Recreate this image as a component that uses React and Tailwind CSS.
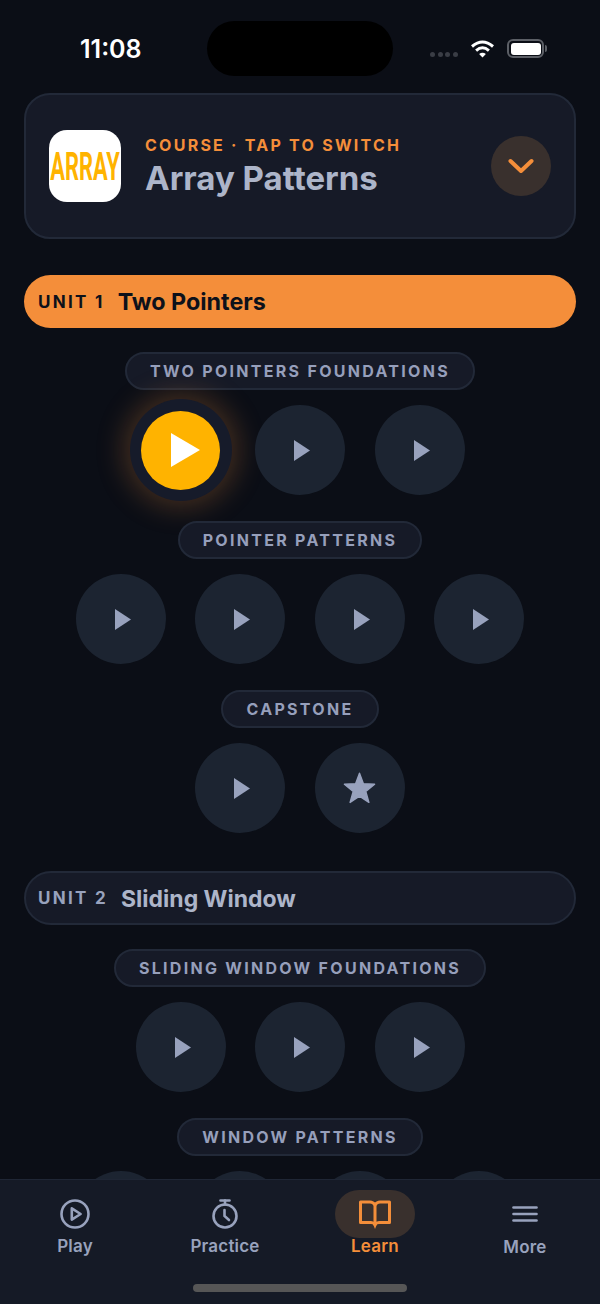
const units = [
  {
    id: 1,
    title: 'Two Pointers',
    active: true,
    groups: [
      { name: 'TWO POINTERS FOUNDATIONS', nodes: ['current', 'play', 'play'] },
      { name: 'POINTER PATTERNS', nodes: ['play', 'play', 'play', 'play'] },
      { name: 'CAPSTONE', nodes: ['play', 'star'] },
    ],
  },
  {
    id: 2,
    title: 'Sliding Window',
    active: false,
    groups: [
      { name: 'SLIDING WINDOW FOUNDATIONS', nodes: ['play', 'play', 'play'] },
      { name: 'WINDOW PATTERNS', nodes: ['play', 'play', 'play', 'play'] },
    ],
  },
];

function Triangle({ className }) {
  return (
    <svg viewBox="0 0 16 21" preserveAspectRatio="none" className={className} fill="currentColor">
      <path d="M0 0 L16 10.5 L0 21 Z" />
    </svg>
  );
}

function StarIcon() {
  return (
    <svg viewBox="0 0 33 32" className="h-[32px] w-[33px]" fill="currentColor" stroke="currentColor" strokeWidth="1.4" strokeLinejoin="round">
      <path d="M16.5 1.2 L20.4 11.8 L31.6 12.3 L22.8 19.4 L25.9 30.4 L16.5 24.2 L7.1 30.4 L10.2 19.4 L1.4 12.3 L12.6 11.8 Z" />
    </svg>
  );
}

function Node({ type }) {
  if (type === 'current') {
    return (
      <div className="flex h-[90px] w-[90px] items-center justify-center">
        <div className="flex h-[102px] w-[102px] shrink-0 items-center justify-center rounded-full bg-[#161b2a] shadow-[0_0_28px_6px_rgba(245,143,58,0.25)]">
          <div className="flex h-[79px] w-[79px] items-center justify-center rounded-full bg-[#ffb300] text-white">
            <Triangle className="ml-[9px] h-[34px] w-[29px]" />
          </div>
        </div>
      </div>
    );
  }
  return (
    <div className="flex h-[90px] w-[90px] items-center justify-center rounded-full bg-[#1c2431] text-[#98a2bd]">
      {type === 'star' ? <StarIcon /> : <Triangle className="ml-[4px] h-[21px] w-[16px]" />}
    </div>
  );
}

function Group({ group, first }) {
  return (
    <div className={first ? 'mt-[24px] flex flex-col items-center' : 'mt-[26px] flex flex-col items-center'}>
      <div className="flex h-[38px] items-center rounded-full border-2 border-[#222938] bg-[#161a27] px-[23px] text-[16px] font-bold tracking-[2.3px] text-[#969fbb]">
        {group.name}
      </div>
      <div className="mt-[15px] flex justify-center gap-[29.5px]">
        {group.nodes.map((type, i) => (
          <Node key={i} type={type} />
        ))}
      </div>
    </div>
  );
}

function StatusBar() {
  return (
    <div className="relative h-[93px] shrink-0">
      <div className="absolute left-[80px] top-[33px] text-[25px] font-semibold leading-[32px] text-white">11:08</div>
      <div className="absolute left-[207px] top-[21px] h-[55px] w-[186px] rounded-full bg-black" />
      <div className="absolute left-[430px] top-[52px] flex gap-[2.5px]">
        {[0, 1, 2, 3].map((i) => (
          <span key={i} className="h-[5px] w-[5px] rounded-full bg-[#3a3d45]" />
        ))}
      </div>
      <svg viewBox="0 0 24 18" className="absolute left-[470px] top-[40px] h-[18px] w-[25px]" fill="none" stroke="white" strokeWidth="3">
        <path d="M1.5 6.5 Q12 -2.5 22.5 6.5" />
        <path d="M5.6 10.6 Q12 5 18.4 10.6" />
        <path d="M12 17.5 L8.6 13.9 Q12 11.4 15.4 13.9 Z" fill="white" stroke="none" />
      </svg>
      <div className="absolute left-[507px] top-[39px] h-[19px] w-[37px] rounded-[6px] border-2 border-[#5c5f66] p-[1.5px]">
        <div className="h-full w-full rounded-[3px] bg-white" />
      </div>
      <div className="absolute left-[545px] top-[45px] h-[7px] w-[2px] rounded-r-full bg-[#5c5f66]" />
    </div>
  );
}

function CourseCard() {
  return (
    <div className="flex h-[146px] items-center rounded-[26px] border-2 border-[#222938] bg-[#161a27] pl-[23px] pr-[23px]">
      <div className="h-[72px] w-[72px] shrink-0 rounded-[18px] bg-white">
        <svg viewBox="0 0 72 72" className="h-[72px] w-[72px]">
          <text
            transform="translate(36 50) scale(0.56 1)"
            textAnchor="middle"
            fill="#ffb300"
            fontFamily="Roboto, sans-serif"
            fontWeight="700"
            fontSize="39"
          >
            ARRAY
          </text>
        </svg>
      </div>
      <div className="ml-[24px] flex-1">
        <div className="text-[16px] font-bold leading-[18px] tracking-[2.25px] text-[#f48e3a]">COURSE · TAP TO SWITCH</div>
        <div className="mt-[5px] text-[33px] font-bold leading-[38px] text-[#adb5c9]">Array Patterns</div>
      </div>
      <div className="flex h-[60px] w-[60px] items-center justify-center rounded-full bg-[#39302d]">
        <svg viewBox="0 0 26 16" className="h-[16px] w-[26px]" fill="none" stroke="#f48e3a" strokeWidth="4" strokeLinecap="round" strokeLinejoin="round">
          <path d="M2.5 3 L13 13 L23.5 3" />
        </svg>
      </div>
    </div>
  );
}

function UnitHeader({ unit }) {
  const cls = unit.active
    ? 'flex h-[53px] items-center rounded-full bg-[#f48e3a] pl-[14px] pt-[2px] text-[#0d111a]'
    : 'flex h-[54px] items-center rounded-full border-2 border-[#222938] bg-[#161a27] pl-[12px] pt-[2px] text-[#98a2bd]';
  return (
    <div className={cls}>
      <span className="text-[17px] font-bold tracking-[2.3px]">UNIT {unit.id}</span>
      <span className={unit.active ? 'ml-[13px] text-[23.3px] font-bold' : 'ml-[13px] text-[23px] font-bold text-[#adb5c9]'}>
        {unit.title}
      </span>
    </div>
  );
}

function TabBar() {
  const tabs = [
    {
      label: 'Play',
      icon: (
        <svg viewBox="0 0 30 30" className="h-[30px] w-[30px]" fill="none" stroke="currentColor" strokeWidth="2.6" strokeLinejoin="round">
          <circle cx="15" cy="15" r="13.5" />
          <path d="M11.8 9.4 L20.6 15 L11.8 20.6 Z" />
        </svg>
      ),
    },
    {
      label: 'Practice',
      icon: (
        <svg viewBox="0 0 30 30" className="h-[30px] w-[30px]" fill="none" stroke="currentColor" strokeWidth="2.6" strokeLinecap="round">
          <path d="M10.5 1.5 H19.5" />
          <path d="M15 1.5 V5.5" />
          <circle cx="15" cy="17" r="11.5" />
          <path d="M14.5 11 V17 L19 21" />
        </svg>
      ),
    },
    {
      label: 'Learn',
      active: true,
      icon: (
        <svg viewBox="0 0 32 29" className="h-[29px] w-[32px]" fill="none" stroke="currentColor" strokeWidth="3" strokeLinejoin="round">
          <path d="M1.5 2 H11 Q14 2 16 5 Q18 2 21 2 H30.5 V22.5 H20 Q17.5 22.5 16 24.5 Q14.5 22.5 12 22.5 H1.5 Z" />
          <path d="M16 5 V24.5" />
          <path d="M14 24 H18 L16 29 Z" fill="currentColor" stroke="none" />
        </svg>
      ),
    },
    {
      label: 'More',
      icon: (
        <svg viewBox="0 0 26 16" className="my-[7px] h-[16px] w-[26px]" fill="none" stroke="currentColor" strokeWidth="2.6" strokeLinecap="round">
          <path d="M1.5 1.5 H24.5" />
          <path d="M1.5 8 H24.5" />
          <path d="M1.5 14.5 H24.5" />
        </svg>
      ),
    },
  ];
  return (
    <div className="relative z-10 h-[125px] shrink-0 border-t border-[#1f2635] bg-[#151a26]">
      <div className="flex pt-[10px]">
        {tabs.map((tab) => (
          <div
            key={tab.label}
            className={tab.active ? 'flex w-[150px] flex-col items-center text-[#f48e3a]' : 'flex w-[150px] flex-col items-center text-[#98a2bd]'}
          >
            <div className={tab.active ? 'flex h-[48px] w-[80px] items-center justify-center rounded-full bg-[#39302d]' : 'flex h-[48px] w-[80px] items-center justify-center'}>
              {tab.icon}
            </div>
            <div className={tab.label === 'More' ? 'mt-[-3px] text-[17px] font-semibold leading-[24px] tracking-[0.2px]' : 'mt-[-4px] text-[17px] font-semibold leading-[24px] tracking-[0.2px]'}>
              {tab.label}
            </div>
          </div>
        ))}
      </div>
      <div className="absolute bottom-[12px] left-[193px] h-[8px] w-[214px] rounded-full bg-[#565656]" />
    </div>
  );
}

export default function App() {
  return (
    <div className="flex h-[1304px] w-[600px] flex-col overflow-hidden bg-[#0b0e16] font-['Inter',sans-serif]">
      <div className="min-h-0 flex-1 overflow-hidden">
        <StatusBar />
        <div className="px-[24px]">
          <CourseCard />
          {units.map((unit) => (
            <div key={unit.id} className={unit.id === 1 ? 'mt-[36px]' : 'mt-[38px]'}>
              <UnitHeader unit={unit} />
              {unit.groups.map((group, i) => (
                <Group key={group.name} group={group} first={i === 0} />
              ))}
            </div>
          ))}
        </div>
      </div>
      <TabBar />
    </div>
  );
}
